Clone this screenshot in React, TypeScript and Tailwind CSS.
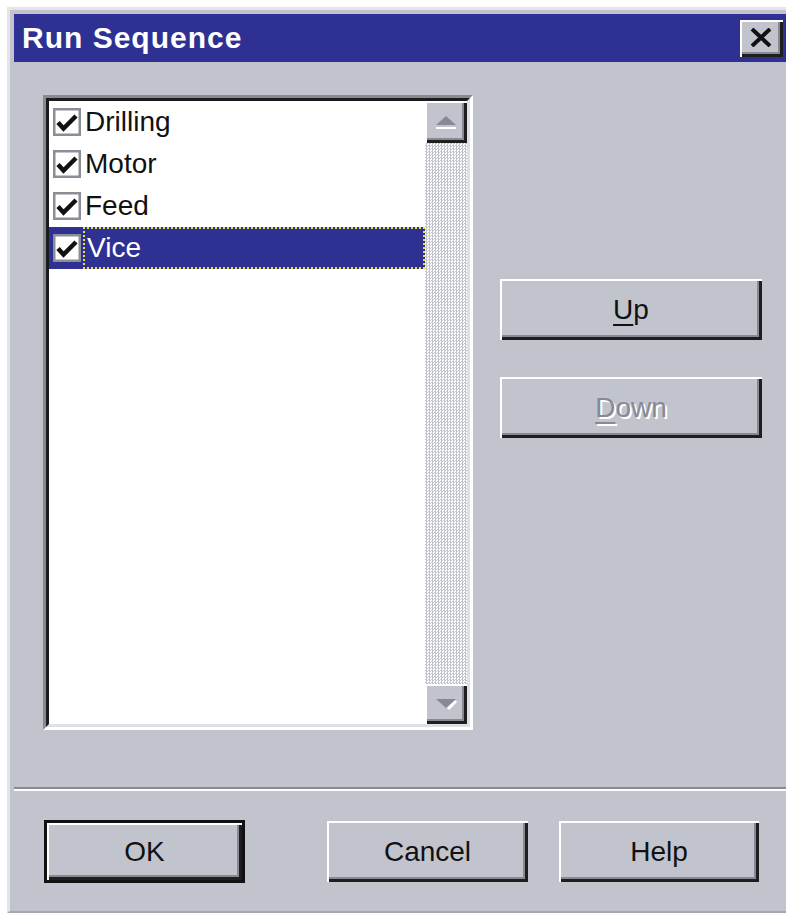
import React from "react";

const raised =
  "shadow-[inset_2px_2px_0_#ffffff,inset_-3px_-3px_0_#1e1e1e,inset_-5px_-5px_0_#878a93]";

function Check() {
  return (
    <svg width="28" height="28" viewBox="0 0 28 28" className="shrink-0">
      <rect x="1.25" y="1.25" width="25.5" height="25.5" fill="#ffffff" stroke="#8b8e96" strokeWidth="2.5" />
      <path d="M5 14.5 L10.5 20.5 L23 8" fill="none" stroke="#111111" strokeWidth="4.5" />
    </svg>
  );
}

function Row({ label, selected }: { label: string; selected?: boolean }) {
  return (
    <div className={`h-[42px] flex items-center ${selected ? "bg-[#2e3192]" : ""}`}>
      <div className="ml-[4px]">
        <Check />
      </div>
      <div
        className={`ml-[2px] flex-1 h-[42px] flex items-center pl-[2px] text-[28px] leading-none ${
          selected ? "border-2 border-dotted border-[#e6e04a] text-white" : "text-[#111111]"
        }`}
      >
        {label}
      </div>
    </div>
  );
}

function Button({
  children,
  w,
  h,
  extra = "",
}: {
  children: React.ReactNode;
  w: string;
  h: string;
  extra?: string;
}) {
  return (
    <div className={`${w} ${h} ${extra} bg-[#c1c4cc] ${raised} flex items-center justify-center text-[28px] text-[#111111] leading-none`}>
      {children}
    </div>
  );
}

export default function App() {
  return (
    <div className="w-[786px] h-[915px] bg-white overflow-hidden font-['Liberation_Sans',Arial,sans-serif]">
      <div className="ml-[7px] mt-[7px] h-[906px] border-l-[3px] border-t-[3px] border-b-[2px] border-l-[#e4e5ea] border-t-[#e4e5ea] border-b-[#a5a8b0] bg-[#c1c4cc] pl-[4px] pt-[4px] flex flex-col">
        {/* title bar */}
        <div className="h-[48px] bg-[#2e3192] flex items-center justify-between pl-[8px] pr-[3px]">
          <span className="text-white font-bold text-[30px] tracking-[1px] leading-none">Run Sequence</span>
          <div className={`w-[43px] h-[37px] bg-[#c1c4cc] ${raised} flex items-center justify-center pb-[2px] pr-[2px]`}>
            <svg width="22" height="19" viewBox="0 0 22 19">
              <path d="M2 1 L20 18 M20 1 L2 18" stroke="#111111" strokeWidth="4" />
            </svg>
          </div>
        </div>

        {/* list and side buttons */}
        <div className="flex pl-[29px] pt-[33px]">
          <div className="w-[430px] h-[635px] border-[3px] border-t-[#878a93] border-l-[#878a93] border-r-white border-b-white">
            <div className="h-full border-[3px] border-t-[#1c1c1c] border-l-[#1c1c1c] border-r-[#dfe0e5] border-b-[#dfe0e5] bg-white flex">
              <div className="flex-1 flex flex-col">
                <Row label="Drilling" />
                <Row label="Motor" />
                <Row label="Feed" />
                <Row label="Vice" selected />
              </div>
              <div className="w-[42px] flex flex-col">
                <div className={`h-[42px] bg-[#c1c4cc] ${raised} flex items-center justify-center`}>
                  <svg width="24" height="14" viewBox="0 0 24 14">
                    <path d="M2 13 L22 13" stroke="#ffffff" strokeWidth="2" />
                    <path d="M2 10 L12 1 L22 10 Z" fill="#878a93" />
                  </svg>
                </div>
                <div className="flex-1 bg-[image:repeating-conic-gradient(#c1c4cc_0_25%,#ffffff_0_50%)] bg-[length:3px_3px]" />
                <div className={`h-[40px] bg-[#c1c4cc] ${raised} flex items-center justify-center`}>
                  <svg width="24" height="14" viewBox="0 0 24 14">
                    <path d="M14 12 L22 4" stroke="#ffffff" strokeWidth="3" />
                    <path d="M2 2 L22 2 L12 11 Z" fill="#878a93" />
                  </svg>
                </div>
              </div>
            </div>
          </div>

          <div className="ml-[27px] pt-[184px] flex flex-col gap-[37px]">
            <Button w="w-[262px]" h="h-[61px]">
              <span>
                <span className="underline decoration-2 underline-offset-[5px]">U</span>p
              </span>
            </Button>
            <Button w="w-[262px]" h="h-[61px]">
              <span className="text-[#878a93] [text-shadow:2px_2px_0_#ffffff]">
                <span className="underline decoration-2 underline-offset-[5px]">D</span>own
              </span>
            </Button>
          </div>
        </div>

        {/* separator */}
        <div className="mt-[57px] h-[2px] bg-[#878a93]" />
        <div className="h-[2px] bg-white" />

        {/* dialog buttons */}
        <div className="flex items-start pl-[30px] pt-[29px]">
          <div className="w-[201px] h-[63px] border-[3px] border-[#111111]">
            <Button w="w-full" h="h-full">OK</Button>
          </div>
          <Button w="w-[201px]" h="h-[61px]" extra="ml-[82px] mt-[1px]">Cancel</Button>
          <Button w="w-[200px]" h="h-[61px]" extra="ml-[31px] mt-[1px]">Help</Button>
        </div>
      </div>
    </div>
  );
}
